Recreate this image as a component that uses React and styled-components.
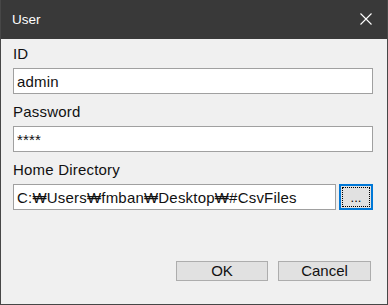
import React from 'react'
import styled, { createGlobalStyle } from 'styled-components'

const font = '"Liberation Sans", Arial, sans-serif'

const Global = createGlobalStyle`
  html, body {
    margin: 0;
    padding: 0;
    background: #f0f0f0;
  }
`

const Janela = styled.div`
  width: 388px;
  height: 305px;
  box-sizing: border-box;
  border: 1px solid #474747;
  border-top: none;
  background: #f0f0f0;
  display: flex;
  flex-direction: column;
  font-family: ${font};
`

const BarraTitulo = styled.div`
  height: 39px;
  flex: none;
  background: #393939;
  display: flex;
  align-items: center;
  justify-content: space-between;
  padding: 0 15px 1px 11px;
  box-sizing: border-box;
  color: #ffffff;
  font-size: 13.5px;
`

const Fechar = styled.svg`
  width: 12px;
  height: 12px;
  display: block;
`

const Conteudo = styled.div`
  flex: 1;
  display: flex;
  flex-direction: column;
  padding: 6px 14px 0 12px;
`

const Rotulo = styled.label`
  display: block;
  font-size: 15px;
  line-height: 18px;
  letter-spacing: 0.2px;
  color: #111;
  margin-top: ${p => (p.primeiro ? '0' : '9px')};
  margin-bottom: 5px;
`

const Caixa = styled.input`
  box-sizing: border-box;
  width: 100%;
  height: 26px;
  margin: 0;
  padding: 0 3px;
  border: 1px solid #a0a0a0;
  background: #fff;
  font-family: ${font};
  font-size: 15px;
  letter-spacing: 0.2px;
  color: #111;
  outline: none;
`

const Linha = styled.div`
  display: flex;
  align-items: center;
  gap: 3px;
`

const Procurar = styled.button`
  box-sizing: border-box;
  width: 34px;
  height: 26px;
  flex: none;
  margin: 0;
  border: 2px solid #0078d7;
  background: #e1e1e1;
  position: relative;
  font-family: ${font};
  font-size: 13px;
  color: #000;
  display: flex;
  align-items: flex-end;
  justify-content: center;
  padding: 0 0 4px 0;
  line-height: 1;
  &::after {
    content: '';
    position: absolute;
    inset: 1px;
    border: 1px dotted #000;
  }
`

const Rodape = styled.div`
  margin-top: auto;
  display: flex;
  justify-content: flex-end;
  gap: 10px;
  padding: 0 2px 23px 0;
`

const Botao = styled.button`
  box-sizing: border-box;
  width: ${p => p.largura}px;
  height: 20px;
  margin: 0;
  padding: 0;
  border: 1px solid #adadad;
  background: #e1e1e1;
  font-family: ${font};
  font-size: 15px;
  color: #111;
  line-height: 18px;
`

export default function App() {
  return (
    <>
      <Global />
      <Janela>
        <BarraTitulo>
          <span>User</span>
          <Fechar viewBox="0 0 12 12">
            <path d="M0.5 0.5 L11.5 11.5 M11.5 0.5 L0.5 11.5" stroke="#ffffff" strokeWidth="1.1" fill="none" />
          </Fechar>
        </BarraTitulo>
        <Conteudo>
          <Rotulo primeiro>ID</Rotulo>
          <Caixa type="text" defaultValue="admin" />
          <Rotulo>Password</Rotulo>
          <Caixa type="text" defaultValue="****" />
          <Rotulo>Home Directory</Rotulo>
          <Linha>
            <Caixa type="text" defaultValue="C:₩Users₩fmban₩Desktop₩#CsvFiles" />
            <Procurar>...</Procurar>
          </Linha>
          <Rodape>
            <Botao largura={92}>OK</Botao>
            <Botao largura={93}>Cancel</Botao>
          </Rodape>
        </Conteudo>
      </Janela>
    </>
  )
}
